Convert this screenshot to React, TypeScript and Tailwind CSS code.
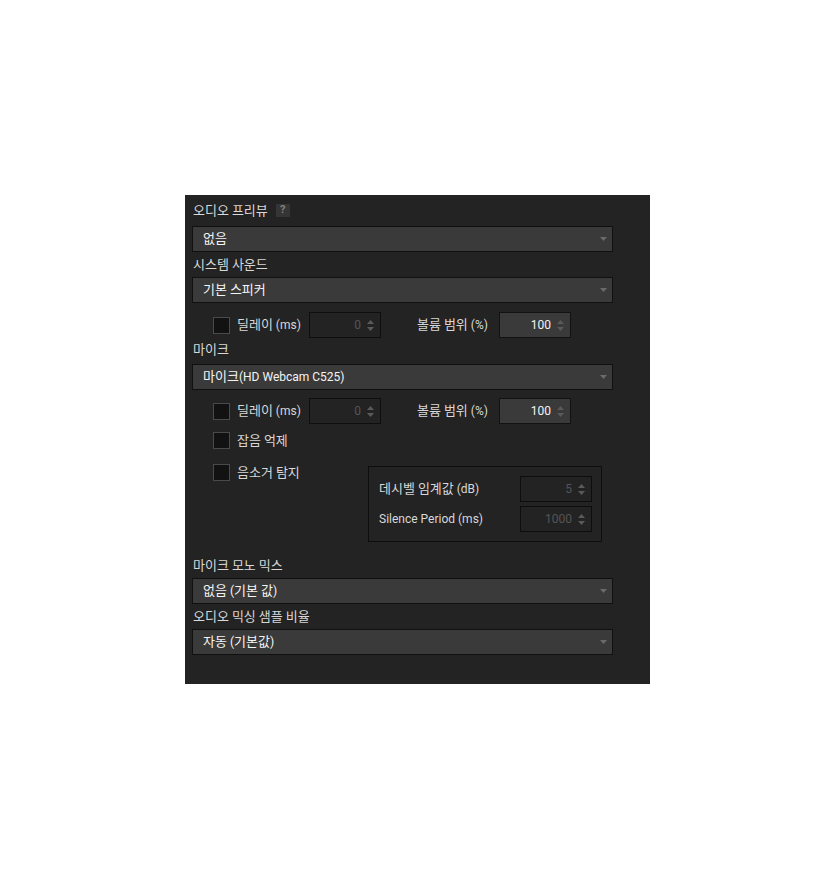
import React from "react";

const font = { fontFamily: "Roboto, 'Noto Sans CJK KR', sans-serif" };

function T({ s }: { s: string }) {
  const parts = s.split(/([\uAC00-\uD7A3]+)/).filter((p) => p.length > 0);
  return (
    <span className="whitespace-pre">
      {parts.map((p, i) =>
        /[\uAC00-\uD7A3]/.test(p) ? (
          <span key={i} className="text-[13px]">{p}</span>
        ) : (
          <span key={i} className="text-[12px]">{p}</span>
        )
      )}
    </span>
  );
}

function Arrow() {
  return (
    <svg width="7" height="4" viewBox="0 0 7 4" className="shrink-0">
      <path d="M0 0 H7 L3.5 4 Z" fill="#6a6a6a" />
    </svg>
  );
}

function Select({ text }: { text: string }) {
  return (
    <div className="flex h-[26px] w-[421px] items-center justify-between border border-[#101010] bg-[#3a3a3a] pl-[10px] pr-[5px] text-[13px] text-[#f4f4f4]">
      <T s={text} />
      <Arrow />
    </div>
  );
}

function Label({ text, className = "" }: { text: string; className?: string }) {
  return (
    <div className={`flex items-center pl-px text-[13px] text-[#d8d8d8] ${className}`}>
      <T s={text} />
    </div>
  );
}

function SpinArrows() {
  return (
    <svg width="7" height="11" viewBox="0 0 7 11" className="shrink-0">
      <path d="M0 4 L3.5 0 L7 4 Z" fill="#5a5a5a" />
      <path d="M0 7 L3.5 11 L7 7 Z" fill="#5a5a5a" />
    </svg>
  );
}

function Spin({ value, enabled }: { value: string; enabled?: boolean }) {
  return (
    <div
      className={`flex h-[26px] w-[72px] items-center justify-end gap-[6px] border pr-[6px] text-[12px] ${
        enabled ? "border-[#121212] bg-[#3a3a3a] text-[#f4f4f4]" : "border-[#0e0e0e] bg-[#232323] text-[#555555]"
      }`}
    >
      <span>{value}</span>
      <SpinArrows />
    </div>
  );
}

function Check() {
  return <div className="h-[17px] w-[17px] shrink-0 border border-[#4a4a4a] bg-[#121212]" />;
}

function DelayRow({ className = "" }: { className?: string }) {
  return (
    <div className={`flex h-[26px] items-center pl-[21px] text-[13px] text-[#d8d8d8] ${className}`}>
      <Check />
      <span className="w-[79px] pl-[7px]">
        <T s="딜레이 (ms)" />
      </span>
      <Spin value="0" />
      <span className="w-[118px] pl-[36px]">
        <T s="볼륨 범위 (%)" />
      </span>
      <Spin value="100" enabled />
    </div>
  );
}

export default function App() {
  return (
    <div className="min-h-[878px] w-[835px] bg-white pl-[185px] pt-[195px]" style={font}>
      <div className="flex h-[489px] w-[465px] flex-col bg-[#232323] pl-[7px]">
        <div className="flex h-[31px] items-center gap-[8px] pl-px text-[13px] text-[#d8d8d8]">
          <T s="오디오 프리뷰" />
          <span className="flex h-[13px] w-[14px] items-center justify-center bg-[#353535] text-[11px] font-bold text-[#808080]">
            ?
          </span>
        </div>
        <Select text="없음" />
        <Label text="시스템 사운드" className="h-[25px]" />
        <Select text="기본 스피커" />
        <DelayRow className="mt-[9px]" />
        <Label text="마이크" className="h-[26px] pb-[3px]" />
        <Select text="마이크(HD Webcam C525)" />
        <DelayRow className="mt-[8px]" />
        <div className="mt-[8px] flex h-[17px] items-center pl-[21px] text-[13px] text-[#d8d8d8]">
          <Check />
          <span className="pl-[7px]">
            <T s="잡음 억제" />
          </span>
        </div>
        <div className="mt-[15px] flex">
          <div className="flex h-[17px] w-[176px] items-center pl-[21px] text-[13px] text-[#d8d8d8]">
            <Check />
            <span className="pl-[7px]">
              <T s="음소거 탐지" />
            </span>
          </div>
          <div className="mt-[2px] flex h-[76px] w-[234px] flex-col gap-[4px] border border-[#0e0e0e] py-[9px] pl-[10px] pr-[9px] text-[13px] text-[#d8d8d8]">
            <div className="flex items-center justify-between">
              <T s="데시벨 임계값 (dB)" />
              <Spin value="5" />
            </div>
            <div className="flex items-center justify-between">
              <T s="Silence Period (ms)" />
              <Spin value="1000" />
            </div>
          </div>
        </div>
        <Label text="마이크 모노 믹스" className="mt-[12px] h-[24px]" />
        <Select text="없음 (기본 값)" />
        <Label text="오디오 믹싱 샘플 비율" className="h-[25px]" />
        <Select text="자동 (기본값)" />
      </div>
    </div>
  );
}
